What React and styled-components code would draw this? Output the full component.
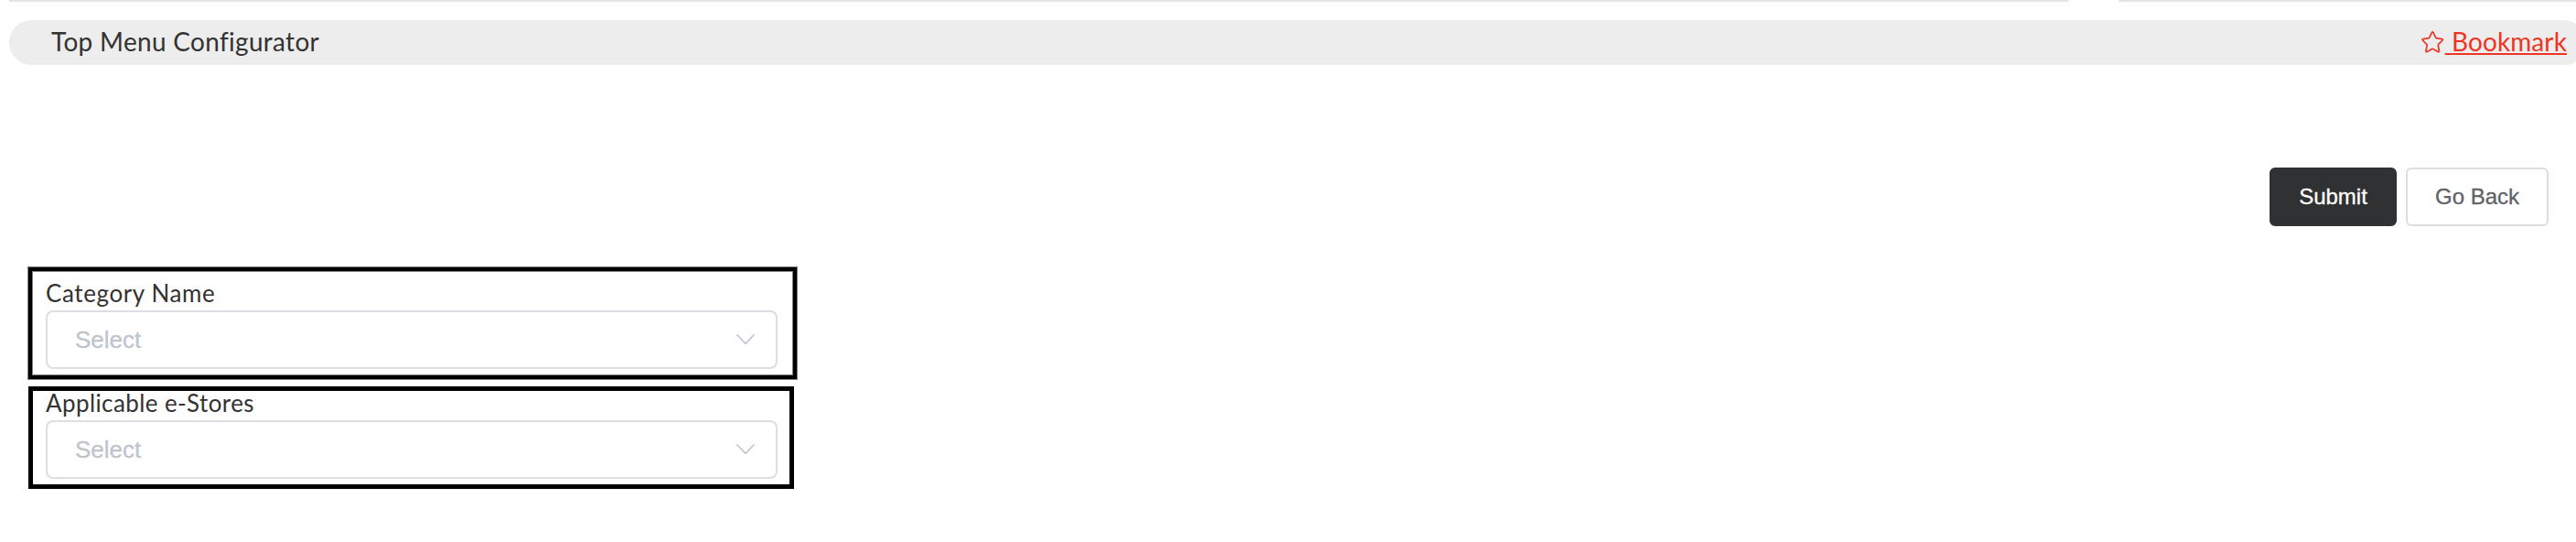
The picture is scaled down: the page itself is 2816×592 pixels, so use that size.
import React from "react";
import styled, { createGlobalStyle } from "styled-components";

const GlobalStyle = createGlobalStyle`
  * {
    box-sizing: border-box;
  }

  body {
    margin: 0;
    background: #fff;
    color: #333;
    font-family: Lato, sans-serif;
    overflow: hidden;
  }
`;

const Page = styled.div`
  width: 2816px;
  height: 592px;
  overflow: hidden;
`;

const Dividers = styled.div`
  display: grid;
  grid-template-columns: 2251px 1fr;
  column-gap: 55px;
  height: 22px;
  padding-left: 10px;
`;

const Divider = styled.div`
  height: 2px;
  background: #e4e4e4;
`;

const TitleBar = styled.header`
  display: flex;
  align-items: center;
  justify-content: space-between;
  width: 2817px;
  height: 49px;
  margin-left: 10px;
  padding: 0 21px 4px 46px;
  border-radius: 25px;
  background: #ededed;
`;

const Title = styled.h1`
  margin: 0;
  font-size: 28px;
  font-weight: 400;
  line-height: 44px;
  letter-spacing: 0.3px;
`;

const Bookmark = styled.a`
  display: flex;
  align-items: center;
  color: #ee3524;
  font-size: 28px;
  line-height: 46px;

  span {
    white-space: pre;
    letter-spacing: 0.1px;
    text-decoration: underline;
    text-decoration-thickness: 2px;
    text-underline-offset: 2px;
    text-decoration-skip-ink: none;
  }
`;

const Actions = styled.div`
  display: flex;
  justify-content: flex-end;
  gap: 10px;
  padding: 112px 30px 45px 0;
`;

const Button = styled.button`
  width: ${(props) => (props.$primary ? "139px" : "156px")};
  height: 64px;
  padding: 0;
  border: 2px solid ${(props) => (props.$primary ? "#303133" : "#dcdce4")};
  border-radius: 6px;
  background: ${(props) => (props.$primary ? "#303133" : "#fff")};
  color: ${(props) => (props.$primary ? "#fff" : "#606266")};
  font-family: "Liberation Sans", Arial, sans-serif;
  font-size: 24px;
  -webkit-text-stroke: 0.3px currentColor;
`;

const Fields = styled.div`
  display: flex;
  flex-direction: column;
  gap: 8px;
  padding-left: 31px;
`;

const Field = styled.div`
  width: ${(props) => (props.$roomy ? "840px" : "837px")};
  height: ${(props) => (props.$roomy ? "122px" : "112px")};
  padding: ${(props) => (props.$roomy ? "11px 0 0 15px" : "0 0 0 14px")};
  border: ${(props) => (props.$roomy ? "4px" : "5px")} solid #000;
  box-shadow: ${(props) => (props.$roomy ? "0 0 0 1px #808080, inset 0 0 0 1px #808080" : "none")};
`;

const Label = styled.label`
  display: block;
  height: 32px;
  font-size: 26px;
  line-height: 26px;
  letter-spacing: ${(props) => props.$spacing};
`;

const Select = styled.div`
  display: flex;
  align-items: center;
  justify-content: space-between;
  width: 800px;
  height: 64px;
  padding: 0 23px 0 30px;
  border: 2px solid #dedde4;
  border-radius: 8px;
  color: #c0c4cc;
  font-family: "Liberation Sans", Arial, sans-serif;
  font-size: 26px;
  -webkit-text-stroke: 0.3px currentColor;
`;

const fields = [
  { label: "Category Name", roomy: true, spacing: "0.6px" },
  { label: "Applicable e-Stores", roomy: false, spacing: "0.4px" },
];

function StarIcon() {
  return (
    <svg width="27" height="27" viewBox="0 0 27 27" fill="none" stroke="currentColor" strokeWidth="1.7" strokeLinejoin="round">
      <path d="M12.5 4.4 Q13.2 3.4 13.9 4.4 L16.7 10.2 Q16.9 10.6 17.4 10.7 L23.6 11.6 Q25 11.9 24.1 13 L19.6 17.4 Q19.2 17.8 19.3 18.3 L20.4 24.5 Q20.5 26 19.2 25.5 L13.8 22.6 Q13.2 22.3 12.6 22.6 L7.2 25.5 Q5.9 26 6 24.5 L7.1 18.3 Q7.2 17.8 6.8 17.4 L2.3 13 Q1.4 11.9 2.8 11.6 L9 10.7 Q9.5 10.6 9.7 10.2 Z" />
    </svg>
  );
}

function ArrowIcon() {
  return (
    <svg width="20" height="12" viewBox="0 0 20 12" fill="none" stroke="currentColor" strokeWidth="1.6" strokeLinecap="round" strokeLinejoin="round">
      <path d="M0.8 0.8 L10 10.4 L19.2 0.8" />
    </svg>
  );
}

export default function App() {
  return (
    <Page>
      <GlobalStyle />
      <Dividers>
        <Divider />
        <Divider />
      </Dividers>
      <TitleBar>
        <Title>Top Menu Configurator</Title>
        <Bookmark>
          <StarIcon />
          <span> Bookmark</span>
        </Bookmark>
      </TitleBar>
      <Actions>
        <Button $primary>Submit</Button>
        <Button>Go Back</Button>
      </Actions>
      <Fields>
        {fields.map((field) => (
          <Field key={field.label} $roomy={field.roomy}>
            <Label $spacing={field.spacing}>{field.label}</Label>
            <Select>
              Select
              <ArrowIcon />
            </Select>
          </Field>
        ))}
      </Fields>
    </Page>
  );
}
